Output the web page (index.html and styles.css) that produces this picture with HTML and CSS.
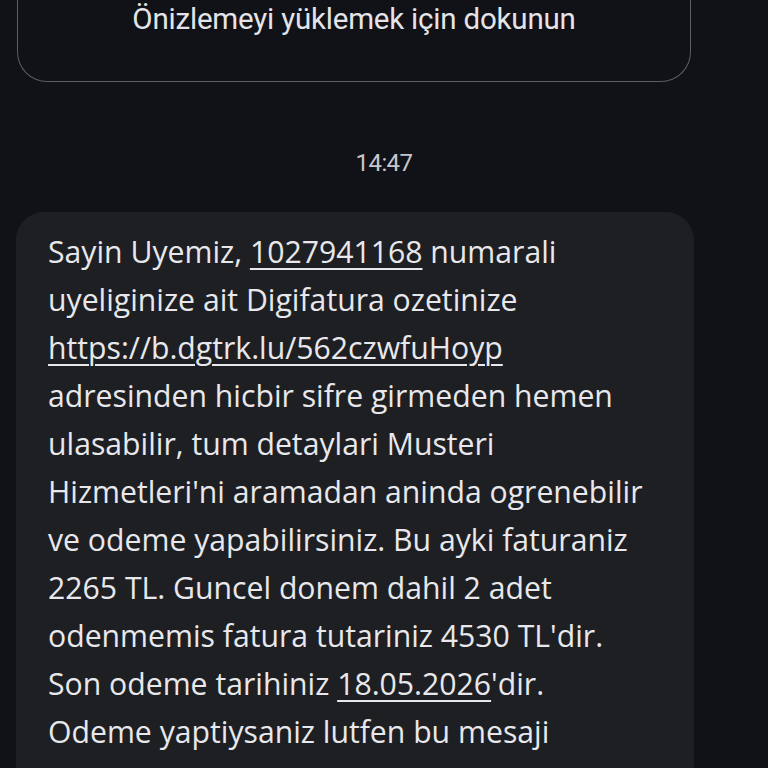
FILE: index.html
```html
<!DOCTYPE html>
<html lang="tr">
<head>
<meta charset="utf-8">
<link rel="stylesheet" href="styles.css">
</head>
<body>
<div class="thread">
  <div class="preview">
    <span class="preview-text">Önizlemeyi yüklemek için dokunun</span>
  </div>
  <div class="time">14:47</div>
  <div class="bubble">
    <p class="msg">Sayin Uyemiz, <span class="link">1027941168</span> numarali<br>uyeliginize ait Digifatura ozetinize<br><span class="link">https://b.dgtrk.lu/562czwfuHoyp</span><br>adresinden hicbir sifre girmeden hemen<br>ulasabilir, tum detaylari Musteri<br>Hizmetleri'ni aramadan aninda ogrenebilir<br>ve odeme yapabilirsiniz. Bu ayki faturaniz<br>2265 TL. Guncel donem dahil 2 adet<br>odenmemis fatura tutariniz 4530 TL'dir.<br>Son odeme tarihiniz <span class="link">18.05.2026</span>'dir.<br>Odeme yaptiysaniz lutfen bu mesaji</p>
  </div>
</div>
</body>
</html>
```
FILE: styles.css
```css
html, body {
  margin: 0;
  padding: 0;
  background: #111217;
  height: 100%;
  overflow: hidden;
}
.thread {
  display: flex;
  flex-direction: column;
}
.preview {
  margin-left: 17px;
  width: 674px;
  height: 82px;
  border: 1.5px solid #5c5d62;
  border-top: none;
  border-radius: 0 0 30px 30px;
  box-sizing: border-box;
  text-align: center;
  font-family: Roboto, "Liberation Sans", sans-serif;
  font-size: 29.5px;
  letter-spacing: -0.2px;
  color: #e4e4e8;
  line-height: 38px;
}
.time {
  text-align: center;
  font-family: Roboto, "Liberation Sans", sans-serif;
  font-size: 24px;
  letter-spacing: -0.6px;
  color: #c6c7cc;
  margin-top: 68px;
  line-height: 26px;
}
.bubble {
  margin: 36px 0 0 16px;
  width: 678px;
  background: #1e1f23;
  border-radius: 28px;
  padding: 16px 20px 60px 32px;
  box-sizing: border-box;
}
.msg {
  margin: 0;
  font-family: "Open Sans", Roboto, sans-serif;
  font-size: 30.2px;
  line-height: 48px;
  color: #e8e8ec;
  white-space: nowrap;
}
.link {
  text-decoration: underline;
  text-underline-offset: 5px;
  text-decoration-thickness: 2px;
}
```
